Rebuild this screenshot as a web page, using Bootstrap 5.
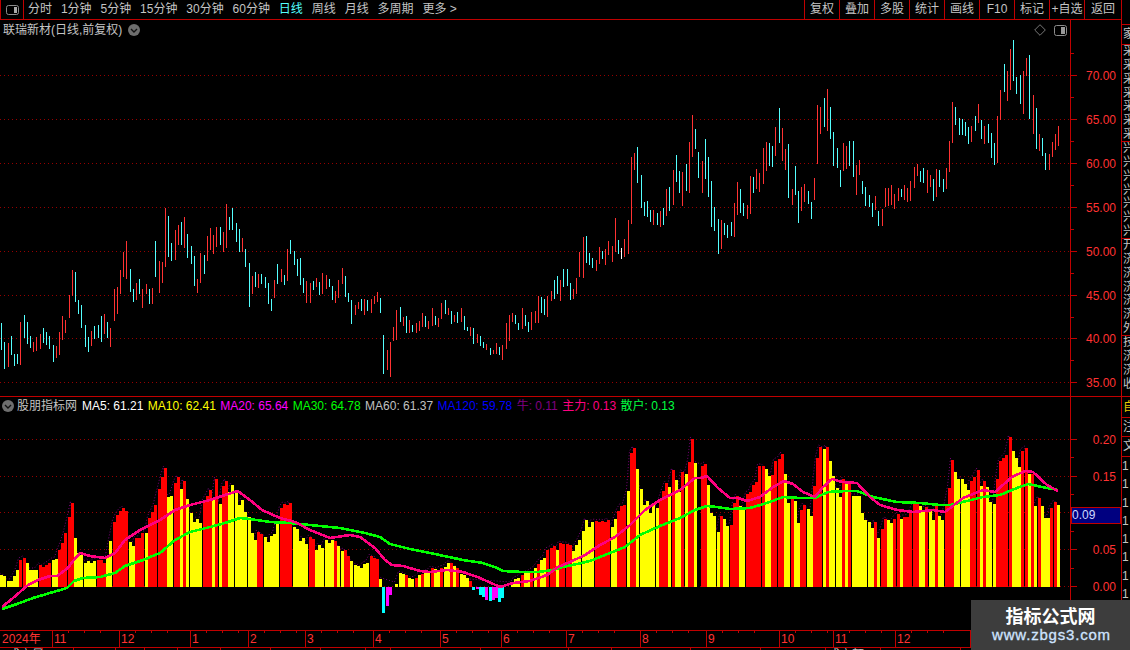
<!doctype html>
<html lang="zh">
<head>
<meta charset="utf-8">
<title>联瑞新材</title>
<link href="https://cdn.jsdelivr.net/npm/bootstrap@5.3.0/dist/css/bootstrap.min.css" rel="stylesheet">
<style>
:root{--line:#c00000;--txt:#c4c4c4;--num:#ff3232}
html,body{background:#000;height:100%;overflow:hidden}
body{font:12px/1 "Liberation Sans","Noto Sans CJK SC",sans-serif;color:var(--txt)}
.stage{width:1130px;height:650px}
.main-col{width:1121px}
.side-col{width:9px;border-left:1px solid var(--line);overflow:hidden;color:var(--txt)}
.topbar{height:20px;border-bottom:1px solid var(--line)}
.panel-btn{width:24px;height:19px;border-left:1px solid var(--line);border-right:1px solid var(--line)}
.topbar .nav{padding-left:4px;column-gap:8.9px}
.topbar .nav-link{padding:0;color:var(--txt);font-size:12px;line-height:19px}
.topbar .nav-link.active{color:#54ffff}
.tool-btn{--bs-btn-padding-x:0;--bs-btn-padding-y:0;--bs-btn-font-size:12px;--bs-btn-border-radius:0;--bs-btn-color:var(--txt);--bs-btn-border-width:0;width:35px;height:19px;line-height:19px;border-left:1px solid var(--line);font-family:inherit}
.tool-btn.wide{width:37px}
.pane-a{height:377px;border-bottom:1px solid var(--line)}
.pane-b{height:233px}
.plot{width:1070px;display:block}
.axis-col{width:50px;border-left:0}
.axis-rule{width:1px;background:var(--line)}
.chart-title{position:absolute;left:3px;top:4px;line-height:12px;white-space:nowrap}
.title-ico{margin-left:6px}
.legend{position:absolute;left:0;top:2px;height:14px;white-space:nowrap}
.circle-ico{width:12px;height:12px;display:block;flex:none}
.legend-ico{margin-left:2px}
.legend-name{margin:0 5px 0 3px;color:var(--txt)}
.legend span.it{margin-right:4.4px}
.corner-ico{position:absolute;top:4px;right:3px}
.val-box{position:absolute;left:0;top:110px;width:50px;height:17px;background:#000080;border:1px solid var(--line);border-right-width:1px;color:#cdd8ff;line-height:15px;padding-left:0}
.time-axis{height:20px;display:block}
.sec{border-bottom:1px solid var(--line);padding-left:1px;overflow:hidden}
.sec div{line-height:13.85px;height:13.85px;width:14px;font-size:12px}
.sec-n div{height:18.3px;line-height:18.3px}
.watermark{position:absolute;left:971px;top:600px;width:159px;height:50px;background:#3d3d3d;text-align:center}
.wm-a{font-family:"Noto Sans CJK SC",sans-serif;font-size:18px;font-weight:700;color:#fff;line-height:18px;padding-top:6px}
.wm-b{font-family:"Liberation Sans",sans-serif;font-size:15px;font-weight:400;-webkit-text-stroke:.3px #cfe4ff;color:#cfe4ff;line-height:16px;margin-top:3px;letter-spacing:.8px;margin-left:2px}
</style>
</head>
<body>
<div class="stage d-flex position-relative overflow-hidden">
  <div class="main-col d-flex flex-column">
    <div class="topbar d-flex align-items-start">
      <div class="panel-btn d-flex align-items-center justify-content-center flex-none">
        <svg width="13" height="10" viewBox="0 0 13 10"><rect x=".5" y=".5" width="12" height="9" rx="2" fill="none" stroke="#8c8c8c"/><rect x="8" y="2" width="3" height="6" fill="#aaa"/></svg>
      </div>
      <nav class="nav flex-nowrap">
        <a class="nav-link" href="#">分时</a><a class="nav-link" href="#">1分钟</a><a class="nav-link" href="#">5分钟</a><a class="nav-link" href="#">15分钟</a><a class="nav-link" href="#">30分钟</a><a class="nav-link" href="#">60分钟</a><a class="nav-link active" href="#">日线</a><a class="nav-link" href="#">周线</a><a class="nav-link" href="#">月线</a><a class="nav-link" href="#">多周期</a><a class="nav-link" href="#">更多 &gt;</a>
      </nav>
      <div class="ms-auto d-flex">
        <button class="btn tool-btn">复权</button><button class="btn tool-btn">叠加</button><button class="btn tool-btn">多股</button><button class="btn tool-btn">统计</button><button class="btn tool-btn">画线</button><button class="btn tool-btn">F10</button><button class="btn tool-btn">标记</button><button class="btn tool-btn">+自选</button><button class="btn tool-btn wide">返回</button>
      </div>
    </div>

    <div class="pane-a d-flex">
      <div class="position-relative">
        <svg id="plotA" class="plot" width="1070" height="376" viewBox="0 20 1070 376"></svg>
        <div class="chart-title d-flex align-items-center">联瑞新材(日线,前复权)<svg class="circle-ico title-ico" viewBox="0 0 12 12"><circle cx="6" cy="6" r="6" fill="#6e6e6e"/><path d="M3 5l3 3 3-3" fill="none" stroke="#111" stroke-width="1.4"/></svg></div>
        <div class="corner-ico d-flex align-items-center gap-2">
          <svg width="12" height="12" viewBox="0 0 12 12"><path d="M6 .7L11.3 6 6 11.3.7 6z" fill="none" stroke="#777"/></svg>
          <svg width="13" height="11" viewBox="0 0 13 11"><rect x=".5" y=".5" width="12" height="10" rx="2" fill="none" stroke="#8c8c8c"/><rect x="7" y="2" width="4" height="7" fill="#999"/></svg>
        </div>
      </div>
      <div class="axis-rule"></div>
      <svg id="axisA" class="axis-col" width="50" height="376" viewBox="1071 20 50 376"></svg>
    </div>

    <div class="pane-b d-flex">
      <div class="position-relative">
        <svg id="plotB" class="plot" width="1070" height="233" viewBox="0 397 1070 233"></svg>
        <div class="legend d-flex align-items-center">
          <svg class="circle-ico legend-ico" viewBox="0 0 12 12"><circle cx="6" cy="6" r="6" fill="#6e6e6e"/><path d="M3 5l3 3 3-3" fill="none" stroke="#111" stroke-width="1.4"/></svg>
          <span class="legend-name">股朋指标网</span>
          <span class="it" style="color:#fff">MA5: 61.21</span>
          <span class="it" style="color:#ff0">MA10: 62.41</span>
          <span class="it" style="color:#f0f">MA20: 65.64</span>
          <span class="it" style="color:#0f0">MA30: 64.78</span>
          <span class="it" style="color:#c0c0c0">MA60: 61.37</span>
          <span class="it" style="color:#0000ff">MA120: 59.78</span>
          <span class="it" style="color:#800080">牛: 0.11</span>
          <span class="it" style="color:#ff0080">主力: 0.13</span>
          <span class="it" style="color:#00ff40">散户: 0.13</span>
        </div>
      </div>
      <div class="axis-rule"></div>
      <div class="position-relative">
        <svg id="axisB" class="axis-col d-block" width="50" height="233" viewBox="1071 397 50 233"></svg>
        <div class="val-box">0.09</div>
      </div>
    </div>

    <svg id="timeAxis" class="time-axis" width="1121" height="20" viewBox="0 630 1121 20"></svg>
  </div>

  <aside class="side-col d-flex flex-column">
    <div class="sec" style="height:25px"></div>
    <div class="sec" style="height:20px"><div style="margin-top:3px">家</div></div>
    <div class="sec" style="height:97px"><div>采</div><div>采</div><div>采</div><div>采</div><div>采</div><div>采</div><div>采</div></div>
    <div class="sec" style="height:97px"><div>兴</div><div>兴</div><div>兴</div><div>兴</div><div>兴</div><div>兴</div><div>兴</div></div>
    <div class="sec" style="height:97px"><div>开</div><div>济</div><div>济</div><div>济</div><div>济</div><div>济</div><div>外</div></div>
    <div class="sec" style="height:61px"><div>技</div><div>济</div><div>济</div><div>收</div></div>
    <div class="sec" style="height:21px;color:#e6c800"><div style="margin-top:4px">自</div></div>
    <div class="sec" style="height:19px"><div style="margin-top:3px">注</div></div>
    <div class="sec" style="height:20px"><div style="margin-top:3px">文</div></div>
    <div class="sec-n ps-0" style="padding-left:1px"><div>1</div><div>1</div><div>1</div><div>1</div><div>1</div><div>1</div><div>1</div><div>1</div></div>
  </aside>

  <div class="watermark">
    <div class="wm-a">指标公式网</div>
    <div class="wm-b">www.zbgs3.com</div>
  </div>
</div>

<script src="https://cdn.jsdelivr.net/npm/bootstrap@5.3.0/dist/js/bootstrap.bundle.min.js"></script>
<script>
const NS='http://www.w3.org/2000/svg';
function el(p,n,a,t){const e=document.createElementNS(NS,n);for(const k in a)e.setAttribute(k,a[k]);if(t!=null)e.textContent=t;p.appendChild(e);return e}
const plotA=document.getElementById('plotA'),plotB=document.getElementById('plotB'),axisA=document.getElementById('axisA'),axisB=document.getElementById('axisB'),tAxis=document.getElementById('timeAxis');
const LINE='#c00000',DOT='#960000',NUM='#ff3232',CY='#54ffff',RD='#ff3232';
/* candles: x,top,bottom,colour (0 cyan,1 red,2 white) measured from 3x crops */
const segA=[0,200,[4,370,450,0,13,426,507,0,25,430,501,1,34,408,465,0,43,462,498,0,52,462,492,0,61,366,495,1,73,345,414,0,82,366,432,0,91,408,444,0,100,426,456,1,109,411,453,1,121,402,447,1,130,384,430,0,139,396,435,0,148,408,447,0,160,435,486,0,169,438,474,1,178,396,465,1,187,348,420,1,196,360,399,1,208,285,354,1,217,210,288,1,226,216,306,0,235,300,342,0,244,315,384,0,256,375,441,0,265,411,456,0,274,393,438,1,283,378,417,0,295,375,414,0,304,348,426,0,313,342,402,1,322,366,414,0,331,384,441,1,343,267,363,1,352,261,342,1,361,210,282,1,370,156,231,1,379,123,237,1,391,207,276,0,400,267,306,0,409,249,300,1,418,237,282,0,427,267,324,1,439,252,282,1,448,267,312,0,457,264,312,1,466,123,231,0,478,183,279,1,487,186,249,1,496,24,201,1,505,48,171,0,514,129,183,0,526,90,180,1,535,75,135,1,544,66,135,0,553,51,144,1,562,102,174,0,574,138,192,0,583,168,258,0,592,237,279,1,601,159,249,1,613,165,222,0,622,108,183,1,631,84,150,1,640,105,162,1,649,81,141,1,661,81,135,0,670,96,156,1,679,12,144,1,688,51,90,0,697,24,90,0,709,69,126,0,718,87,156,0,727,114,156,1,736,147,201,0,748,189,321,0,757,228,282,1,766,216,261,0,775,222,264,1,784,222,252,0,796,231,264,0,805,249,312,0,814,297,333,0,823,240,294,1,832,192,252,0,844,207,246,1,853,225,255,0,862,147,243,1,871,120,162,0,883,153,195,0,892,177,228,0]];
const segB=[300,130,[1,384,465,0,10,444,489,0,19,453,519,1,31,459,519,1,40,453,480,0,49,444,471,1,58,456,495,0,67,429,492,1,79,435,477,1,88,447,471,0,97,468,510,0,106,483,519,1,115,450,504,1,127,414,462,1,136,438,501,0,145,489,516,0,154,510,582,0,166,525,555,1,175,516,537,1,184,507,543,0,193,507,555,1,202,510,543,0,214,507,549,1,223,498,522,1,232,486,516,1,241,504,549,0,250,615,732,0,262,660,720,1,271,636,741,1,280,591,633,1,289,540,630,1,301,531,576,0,310,561,588,1,319,558,609,0,328,570,609,1,337,585,606,0,349,579,609,1,358,573,603,1,367,549,591,1,376,558,591,0,385,573,597,1,397,534,588,1,406,558,585,0,415,564,591,1,424,519,567,1,436,510,552,0,445,534,555,1,454,543,582,0,463,555,576,1,472,546,579,0,484,534,576,1,493,558,600,0,502,591,603,0,511,591,618,1,520,594,642,0,532,612,639,1,541,618,648,0,550,636,654,0,559,642,660,1,571,654,675,0,580,660,672,1,589,639,672,1,598,651,675,0,607,645,690,1,619,579,657,1,628,555,633,1,637,549,576,1,646,555,582,0,655,579,600,0,667,534,597,1,676,555,588,0,685,576,606,0,694,546,600,1,706,543,579,1,715,498,579,1,724,501,549,0,733,507,555,0,742,498,561,1,754,483,513,1,763,450,507,0,772,438,492,0,781,450,513,1,790,417,471,0,802,417,468,0,811,459,510,0,820,477,507,1,829,444,492,1,838,366,441,1,850,321,444,1,859,318,399,0,868,369,405,0,877,384,414,0,889,390,423,1,898,351,402,1,907,363,387,0,916,357,405,1,925,333,375,1,937,348,396,1,946,264,366,1,955,330,372,0,964,354,387,2,973,327,381,1,985,270,372,1,994,81,282,1,1003,69,120,1,1012,51,159,0,1024,135,234,0,1033,216,258,0,1042,213,261,0,1051,240,276,0,1060,240,285,1,1072,249,285,0,1081,243,291,1,1090,234,285,0,1099,177,258,1,1108,171,243,0,1120,120,225,1,1129,75,156,0,1138,123,189,0]];
const segC=[680,30,[7,426,528,1,19,402,483,0,28,336,489,1,37,255,381,1,46,297,357,0,55,366,444,0,67,393,489,1,76,327,447,0,85,381,501,0,94,453,591,0,103,531,603,0,115,567,672,0,124,570,657,1,133,579,615,0,142,585,624,0,154,576,618,0,163,519,621,1,172,456,555,1,181,477,549,0,190,519,558,0,202,525,567,1,211,438,552,1,220,441,489,0,229,417,477,1,238,429,486,1,250,354,462,1,259,336,423,1,268,339,408,0,277,348,411,0,286,291,378,1,298,234,339,0,307,294,393,1,316,357,420,1,325,342,504,0,337,477,525,1,346,408,495,0,355,483,579,0,364,471,543,1,373,462,516,1,385,483,522,0,394,516,567,0,403,444,510,1,412,225,402,1,421,231,312,1,433,204,291,0,442,177,303,1,451,231,327,0,460,306,408,0,472,354,414,0,481,420,471,0,490,339,423,1,499,348,417,1,508,333,408,0,520,333,441,0,529,405,495,1,538,390,435,1,547,453,492,0,556,471,528,0,568,495,531,0,577,519,561,0,586,498,540,1,595,543,588,0,607,537,588,1,616,474,531,1,625,474,528,1,634,465,525,1,643,492,537,1,655,474,513,1,664,477,501,0,673,465,510,1,682,474,516,1,691,453,513,1,703,411,474,1,712,402,438,1,721,423,456,0,730,414,459,0,742,420,489,1,751,435,471,1,760,447,513,0,769,417,501,1,778,420,471,0,790,447,486,0,799,414,477,1,808,333,426,1,817,216,339,1,826,231,285,0,838,264,315,0,847,267,315,0,856,276,318,0,865,291,342,0,874,288,336,1,886,258,303,0,895,222,279,1,904,270,327,0,913,288,342,1,925,282,339,0,934,309,384,0,943,339,405,0,952,258,399,1,961,180,270,1,973,102,186,0,982,123,213,1,991,57,180,1,1000,30,153,0,1009,141,192,0,1021,135,222,0,1030,123,252,1,1039,84,138,1,1048,75,267,0,1060,195,312,1,1069,234,357,0,1078,312,363,1,1087,324,378,0,1096,369,420,0,1108,372,420,1,1117,336,381,1,1126,312,360,1,1135,288,348,1]];
/* grid lines */
[75,119,163,207,251,295,338,382].forEach(y=>el(plotA,'line',{x1:0,x2:1070,y1:y+.5,y2:y+.5,stroke:DOT,'stroke-dasharray':'1 3'}));
const xs=[];
[segA,segB,segC].forEach(([ox,oy,d])=>{for(let i=0;i<d.length;i+=4){const x=Math.floor(ox+d[i]/3),t=Math.round(oy+d[i+1]/3),b=Math.round(oy+d[i+2]/3);xs.push(x);
 el(plotA,'rect',{x,y:t,width:1,height:Math.max(1,b-t),fill:[CY,RD,'#fff'][d[i+3]]})}});
/* axis A */
function axis(svg,major,minor,labels){
 major.forEach((y,i)=>{el(svg,'rect',{x:1071,y,width:6,height:1,fill:LINE});
  if(labels[i])el(svg,'text',{x:1116,y:y+5,'text-anchor':'end',fill:NUM,'font-size':12,'font-family':'Liberation Sans'},labels[i])});
 minor.forEach(y=>el(svg,'rect',{x:1071,y,width:3,height:1,fill:LINE}));
}
axis(axisA,[75,119,163,207,251,295,338,382],[53,97,141,185,229,273,317,360],['70.00','65.00','60.00','55.00','50.00','45.00','40.00','35.00']);
axis(axisB,[439,476,512,549,586],[457,494,531,568,605],['0.20','0.15','','0.05','0.00']);
/* lower chart */
[439,476,512,549,586].forEach(y=>el(plotB,'line',{x1:0,x2:1070,y1:y+.5,y2:y+.5,stroke:DOT,'stroke-dasharray':'1 3'}));
const env=[[0,572],[6,577],[10,582],[14,574],[22,552],[26,560],[32,570],[40,565],[50,560],[60,548],[66,530],[72,503],[76,540],[84,558],[95,560],[105,560],[115,515],[125,505],[130,535],[140,535],[155,505],[165,465],[170,490],[178,475],[184,480],[190,500],[198,510],[208,492],[216,479],[220,495],[228,472],[236,480],[245,495],[252,525],[260,530],[270,535],[282,505],[290,500],[300,530],[315,540],[330,535],[345,550],[360,565],[370,555],[378,560],[381,587],[395,587],[400,570],[410,578],[425,570],[440,565],[450,560],[460,570],[470,578],[472,587],[510,587],[515,578],[525,572],[535,565],[545,550],[555,545],[565,540],[575,545],[585,512],[595,518],[605,520],[615,515],[625,500],[630,453],[634,446],[638,465],[643,485],[650,497],[660,497],[667,478],[673,469],[680,479],[683,468],[690,457],[692,437],[696,442],[699,480]];
const redR=[[19,22],[23,26],[39,50],[58,73],[97,105],[113,128],[135,145],[149,167],[173,180],[183,186],[203,212],[215,218],[222,229],[258,262],[280,292],[308,315],[333,338],[343,350],[370,379],[405,408],[415,418],[421,424],[430,433],[440,443],[451,454],[457,460],[468,471],[520,523],[530,533],[537,540],[546,556],[559,572],[595,610],[617,627],[630,636],[660,668],[672,675],[682,685],[689,693]];
function envAt(x){for(let i=1;i<env.length;i++)if(x<=env[i][0]){const a=env[i-1],b=env[i];return a[1]+(b[1]-a[1])*(x-a[0])/(b[0]-a[0])}return 587}
const BASE=587,bars=[];
xs.filter(x=>x<698).forEach((x,i)=>{
  const red=redR.some(r=>x>=r[0]&&x<r[1]);
  const e=envAt(x),h=(i*37+x*13)%17;
  let top=red?e+h%4:e+(BASE-e)*(.06+h/17*.16);
  top=Math.round(top);
  if(top<BASE)bars.push([x-1,top,red]);
});
const right=[7,107,1,16,102,1,25,165,0,34,250,0,43,258,0,55,306,0,64,258,1,73,267,0,82,288,0,94,285,1,103,218,1,112,198,1,121,228,0,130,240,0,142,192,1,151,186,1,160,165,1,169,156,1,178,108,1,190,108,1,199,117,0,208,138,0,217,135,1,226,93,1,238,87,1,247,72,1,256,132,0,265,218,0,277,207,1,286,213,0,295,279,0,304,240,1,313,225,1,325,237,0,334,258,0,343,168,1,352,84,1,361,51,1,373,57,0,382,51,1,391,93,0,400,138,0,412,174,0,421,201,0,430,147,1,439,159,0,448,159,1,460,198,0,469,198,0,478,198,0,487,249,0,496,270,0,508,276,0,517,294,0,526,276,1,535,324,0,547,297,1,556,267,1,565,270,0,574,279,0,583,267,1,595,252,1,604,267,0,613,261,1,622,261,1,631,249,1,643,222,1,652,222,1,661,228,0,670,243,0,679,231,1,691,237,0,700,270,0,709,228,1,718,258,0,727,270,0,739,222,1,748,174,1,757,90,1,766,126,0,775,147,0,787,147,0,796,162,0,805,180,0,814,153,1,823,141,1,835,120,1,844,168,0,853,153,1,862,171,0,871,216,0,883,222,0,892,147,1,901,93,1,910,84,1,919,75,1,931,21,1,940,63,0,949,84,0,958,111,0,967,63,1,979,54,1,988,132,0,997,132,1,1006,228,0,1018,204,1,1027,228,0,1036,264,0,1045,264,0,1054,234,1,1066,216,1,1075,225,0];
for(let i=0;i<right.length;i+=3)bars.push([Math.floor(700+right[i]/3)-1,Math.round(430+right[i+1]/3),!!right[i+2]]);
el(plotB,'polyline',{points:bars.map(b=>(b[0]-.5)+','+(b[1]-2)).join(' '),fill:'none',stroke:'#7a007a','stroke-dasharray':'1 2'});
bars.forEach(b=>el(plotB,'rect',{x:b[0],y:b[1],width:3,height:BASE-b[1],fill:b[2]?'#ff0000':'#ffff00'}));
/* negative bars */
[[382,613,0],[386,606,1],[389,595,1],[472,590,0],[476,589,1],[479,595,0],[482,597,0],[485,600,1],[489,601,0],[492,600,1],[495,598,1],[498,602,0],[501,598,0]].forEach(b=>el(plotB,'rect',{x:b[0],y:BASE,width:3,height:b[1]-BASE,fill:b[2]?'#ff00ff':'#00ffff'}));
/* moving averages */
const green=[[2,609],[17,604],[33,598],[50,593],[67,588],[74,581],[83,578],[100,577],[115,573],[125,566],[143,560],[160,553],[175,540],[190,532],[210,527],[225,523],[240,518],[250,519],[270,522],[290,523],[310,525],[340,528],[365,533],[380,537],[390,544],[410,549],[430,553],[463,560],[483,563],[497,568],[503,571],[523,572],[538,572],[553,570],[563,567],[577,564],[590,561],[610,553],[625,547],[640,535],[660,526],[680,518],[695,510],[701,508],[707,506],[717,507],[730,509],[750,508],[767,503],[783,497],[800,498],[815,498],[828,492],[847,491],[857,491],[873,497],[897,502],[920,503],[940,505],[950,505],[967,501],[983,497],[1000,495],[1017,488],[1028,484],[1047,488],[1058,490]];
const pink=[[2,607],[13,598],[28,585],[38,580],[50,576],[57,576],[68,568],[74,560],[80,553],[90,556],[105,558],[115,553],[125,540],[140,530],[160,520],[175,510],[190,505],[210,500],[225,495],[238,491],[250,500],[262,510],[280,518],[295,522],[310,530],[330,538],[350,535],[360,537],[375,548],[385,560],[392,565],[403,566],[420,571],[430,572],[447,570],[463,572],[480,578],[500,587],[513,583],[530,581],[547,575],[558,567],[570,562],[585,555],[600,545],[615,537],[630,525],[645,510],[660,500],[680,490],[695,478],[701,478],[707,476],[718,488],[730,498],[738,498],[747,501],[760,497],[773,487],[784,481],[793,484],[803,492],[815,497],[823,487],[832,479],[842,482],[857,483],[870,497],[880,505],[897,510],[913,512],[933,510],[945,512],[963,498],[983,490],[995,492],[1012,477],[1025,471],[1033,472],[1047,485],[1058,491]];
[[green,'#00ff00'],[pink,'#ff0080']].forEach(([p,c])=>el(plotB,'polyline',{points:p.map(a=>a.join(',')).join(' '),fill:'none',stroke:c,'stroke-width':2.6,'stroke-linejoin':'round','shape-rendering':'crispEdges'}));
/* time axis */
el(tAxis,'rect',{x:0,y:630,width:1121,height:1,fill:LINE});
el(tAxis,'rect',{x:0,y:647,width:1121,height:1,fill:LINE});
const ff={'font-family':'Liberation Sans, Noto Sans CJK SC, sans-serif','font-size':12,fill:NUM};
el(tAxis,'text',Object.assign({x:2,y:643},ff),'2024年');
[[52,'11'],[119,'12'],[190,'1'],[248,'2'],[305,'3'],[373,'4'],[440,'5'],[501,'6'],[566,'7'],[640,'8'],[706,'9'],[779,'10'],[833,'11'],[895,'12'],[970,'']].forEach(([x,t])=>{
  el(tAxis,'rect',{x,y:631,width:1,height:16,fill:LINE});
  if(t)el(tAxis,'text',Object.assign({x:x+2,y:643},ff),t);
  [16,32,48].forEach(d=>{if(x+d<1070)el(tAxis,'rect',{x:x+d,y:631,width:1,height:2,fill:LINE})});
});
[42,73,115,144,177,220,270,320,365,390,480,568,611,690,760,825,880,960].forEach(x=>el(tAxis,'rect',{x,y:648,width:1,height:2,fill:LINE}));
el(tAxis,'text',{x:8,y:659,fill:'#c4c4c4','font-size':12,'font-family':'Noto Sans CJK SC, sans-serif'},'成交量');
el(tAxis,'text',{x:828,y:659,fill:'#c4c4c4','font-size':12,'font-family':'Noto Sans CJK SC, sans-serif'},'成交额');
</script>
</body>
</html>
